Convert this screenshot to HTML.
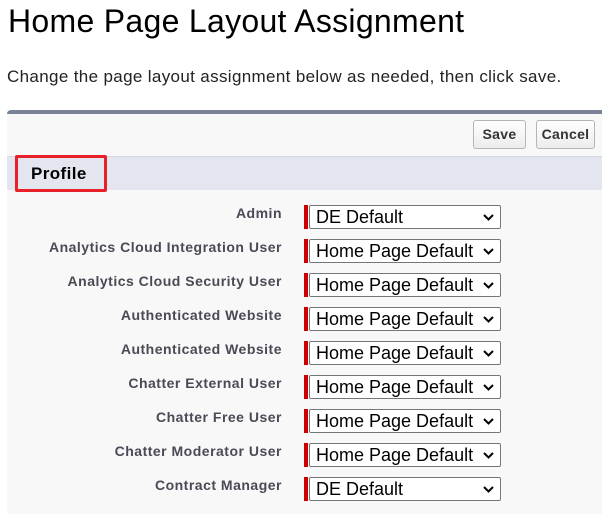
<!DOCTYPE html>
<html><head><style>
body{margin:0;width:602px;height:503px;overflow:hidden;background:#fff;font-family:"Liberation Sans",Arial,sans-serif;position:relative}
h1{position:absolute;left:8px;top:3px;margin:0;font-size:32px;letter-spacing:0.3px;font-weight:normal;color:#000}
.sub{position:absolute;left:7px;top:67px;font-size:17px;letter-spacing:0.35px;color:#222}
.panel{position:absolute;left:7px;top:110px;width:600px;height:400px;background:#f8f8f8;border-top:4px solid #7a8296;border-radius:4px 0 0 0}
.btn{position:absolute;top:120px;height:27px;border:1px solid #b5b5b5;border-radius:3px;background:linear-gradient(#fff,#ececec);font-weight:bold;font-size:14px;letter-spacing:0.3px;color:#333;line-height:27px;text-align:center}
.line{position:absolute;left:7px;top:156px;width:595px;height:1px;background:#d4dadc}
.sec{position:absolute;left:7px;top:157px;width:595px;height:33px;background:#e3e6ee}
.red{position:absolute;left:15px;top:155px;width:86px;height:31px;border:3px solid #e8202a;border-radius:2px}
.sec span{position:absolute;left:24px;top:7px;font-weight:bold;font-size:17px;letter-spacing:0.4px;color:#000}
.lab{position:absolute;right:320px;font-weight:bold;font-size:14px;letter-spacing:0.5px;color:#4a4a56;white-space:nowrap}
.bar{position:absolute;left:304px;width:4px;height:24px;background:#c00}
.sel{position:absolute;left:309px;border:1px solid #767676;border-radius:2px;background:#fff;font-size:18px;color:#000;line-height:22px;padding-left:6px;box-sizing:border-box;width:192px;height:24px}
.sel svg{position:absolute;right:6px;top:8px}
</style></head><body>
<h1>Home Page Layout Assignment</h1>
<div class="sub">Change the page layout assignment below as needed, then click save.</div>
<div class="panel"></div>
<div class="btn" style="left:473px;width:51px">Save</div>
<div class="btn" style="left:536px;width:57px">Cancel</div>
<div class="line"></div>
<div class="sec"><span>Profile</span></div>
<div class="red"></div>
<div id="rows"></div>
<script>
var rows=[["Admin","DE Default"],["Analytics Cloud Integration User","Home Page Default"],["Analytics Cloud Security User","Home Page Default"],["Authenticated Website","Home Page Default"],["Authenticated Website","Home Page Default"],["Chatter External User","Home Page Default"],["Chatter Free User","Home Page Default"],["Chatter Moderator User","Home Page Default"],["Contract Manager","DE Default"]];
var h="";rows.forEach(function(r,i){var t=205+34*i;
h+='<div class="lab" style="top:'+t+'px">'+r[0]+'</div><div class="bar" style="top:'+t+'px"></div><div class="sel" style="top:'+t+'px">'+r[1]+'<svg width="11" height="7" viewBox="0 0 11 7"><path d="M1 1l4.5 4.5L10 1" stroke="#000" stroke-width="2" fill="none"/></svg></div>';});
document.getElementById("rows").innerHTML=h;
</script>
</body></html>
